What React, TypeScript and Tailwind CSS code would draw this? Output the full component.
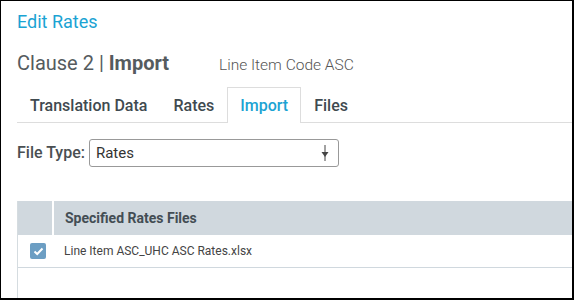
import React from 'react';

const tabs = ['Translation Data', 'Rates', 'Import', 'Files'];

export default function App() {
  return (
    <div className="w-[574px] h-[300px] overflow-hidden bg-white border-t border-l border-r-2 border-b-2 border-black font-['Roboto',sans-serif]">
      <div className="pl-[16px] pt-[9px]">
        <h1 className="text-[18px] leading-[24px] text-[#1ba3d3]">Edit Rates</h1>

        <div className="flex items-baseline mt-[14px] h-[24px]">
          <h2 className="text-[20px] text-[#555b5e]">
            Clause 2 | <span className="font-bold">Import</span>
          </h2>
          <span className="ml-[50px] text-[15.5px] font-light text-[#555]">Line Item Code ASC</span>
        </div>

        {/* Tabs */}
        <div className="flex mt-[15px] border-b border-[#dddddd] h-[36px]">
          {tabs.map((tab) => (
            <div
              key={tab}
              className={
                tab === 'Import'
                  ? 'px-[12px] border border-b-0 border-[#dddddd] bg-white -mb-px text-[#1ba3d3] font-medium text-[16px] leading-[35px]'
                  : 'px-[12px] text-[#3f4a50] font-medium text-[16px] leading-[35px] border border-transparent'
              }
            >
              {tab}
            </div>
          ))}
        </div>

        {/* File type */}
        <div className="flex items-center mt-[16px]">
          <label className="text-[16px] font-medium text-[#4a4f52] mr-[4px]">File Type:</label>
          <div className="relative w-[250px] h-[28px] border border-[#999] rounded-[3px] flex items-center pl-[6px] text-[15px] text-[#333]">
            Rates
            <svg className="absolute right-[9px] top-[5px]" width="8" height="17" viewBox="0 0 8 17">
              <line x1="4" y1="0" x2="4" y2="16" stroke="#444" strokeWidth="1" />
              <path d="M0.5 7 L7.5 7 L4 12 Z" fill="#444" />
            </svg>
          </div>
        </div>

        {/* Table */}
        <div className="mt-[34px] border-l border-[#d5dce0] h-[200px]">
          <div className="flex h-[34px] bg-white">
            <div className="w-[34px] bg-[#d0d8de]" />
            <div className="flex-1 ml-[2px] bg-[#d0d8de] flex items-center pl-[11px] text-[14px] font-bold text-[#434d54]">
              Specified Rates Files
            </div>
          </div>
          <div className="flex items-center h-[33px] border-b border-[#d0d8de] pl-[12px]">
            <div className="w-[16px] h-[16px] rounded-[2px] bg-[#6c9ec3] flex items-center justify-center">
              <svg width="11" height="9" viewBox="0 0 11 9">
                <path d="M1.5 4.5 L4.2 7 L9.5 1.5" fill="none" stroke="white" strokeWidth="2" />
              </svg>
            </div>
            <span className="ml-[18px] text-[12px] text-[#444]">Line Item ASC_UHC ASC Rates.xlsx</span>
          </div>
        </div>
      </div>
    </div>
  );
}
